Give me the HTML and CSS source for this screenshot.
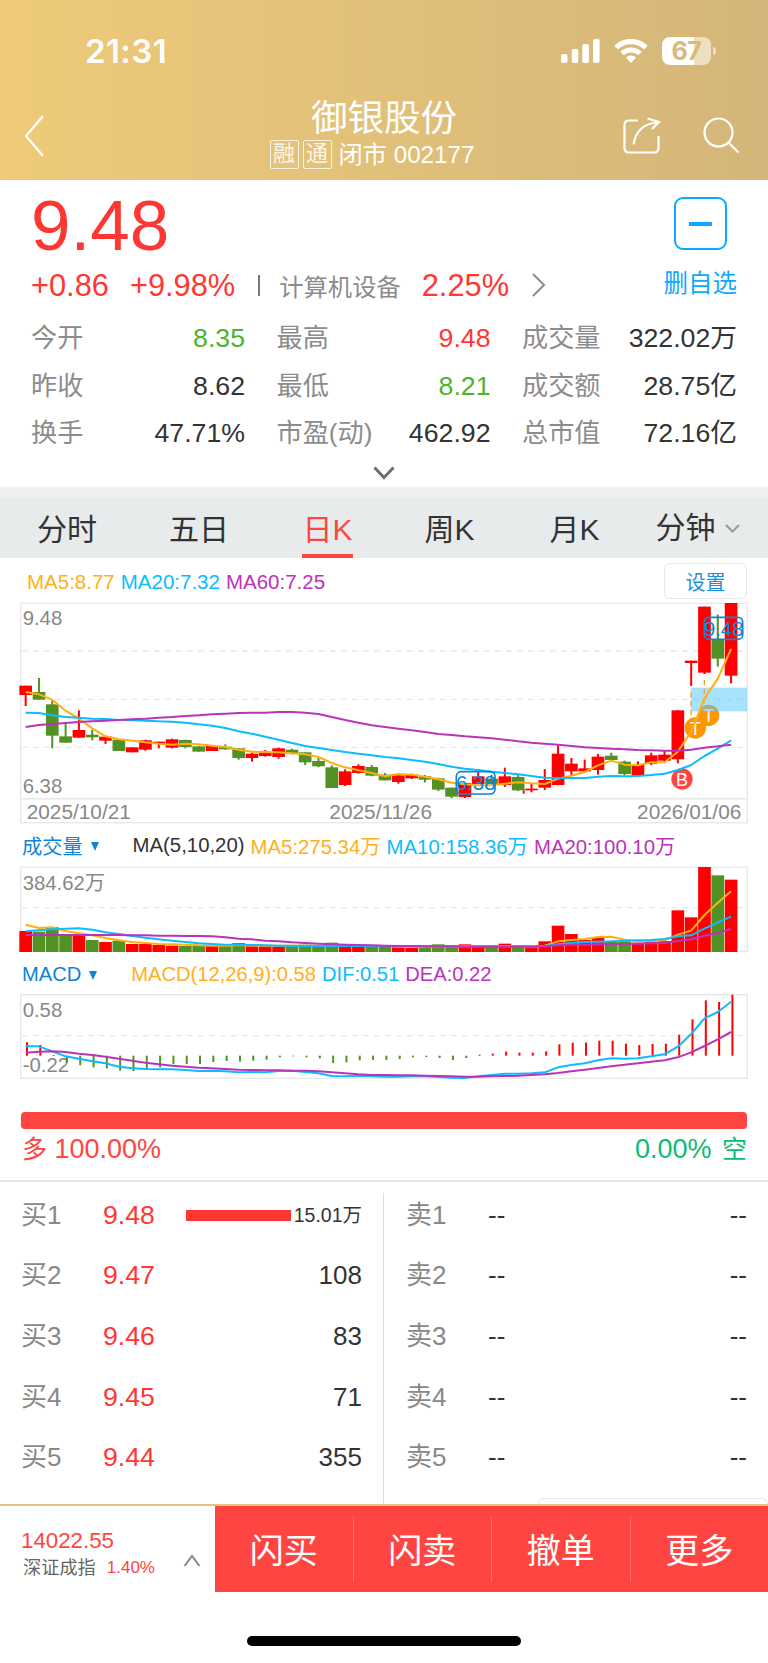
FILE: index.html
```html
<!DOCTYPE html>
<html lang="zh-CN">
<head>
  <meta charset="UTF-8" />
  <meta name="viewport" content="width=device-width, initial-scale=1.0" />
  <title>御银股份 002177</title>
  <link rel="stylesheet" href="styles.css">
</head>
<body>
  <header class="header">
    <div class="status-bar">
      <span class="clock">21:31</span>
      <div class="status-icons">
        <svg width="39" height="25" viewBox="0 0 39 25" fill="#fff">
          <rect x="0" y="15" width="6.600" height="9" rx="2" />
          <rect x="10.700" y="10" width="6.600" height="14" rx="2" />
          <rect x="21.300" y="5" width="6.600" height="19" rx="2" />
          <rect x="32" y="0" width="6.600" height="24" rx="2" />
        </svg>
        <svg width="34" height="25" viewBox="0 0 34 25" fill="#fff">
          <path d="M17 0C10.400 0 4.400 2.600 0.400 6.700L4 10.400C7.200 7.200 11.800 5.200 17 5.200S26.800 7.200 30 10.400L33.600 6.700C29.600 2.600 23.600 0 17 0Z" />
          <path d="M17 8.400C12.800 8.400 9 10.100 6.200 12.700L9.900 16.300C11.700 14.600 14.200 13.600 17 13.600S22.300 14.600 24.100 16.300L27.800 12.700C25 10.100 21.200 8.400 17 8.400Z" />
          <path d="M17 16.500C15 16.500 13.200 17.300 11.900 18.500L17 24L22.100 18.500C20.800 17.300 19 16.500 17 16.500Z" />
        </svg>
        <div class="battery"><span>67</span></div>
      </div>
    </div>
    <div class="nav-bar">
      <svg class="back" width="20" height="42" viewBox="0 0 20 42"><path d="M19 1L2 21L19 41" /></svg>
      <div class="nav-title">
        <h1>御银股份</h1>
        <p><i>融</i><i>通</i>闭市 002177</p>
      </div>
      <div class="nav-icons">
        <svg width="40" height="40" viewBox="0 0 40 40">
          <path d="M17 4.500H8Q3.500 4.500 3.500 9V32Q3.500 36.500 8 36.500H33Q37.500 36.500 37.500 32V20" />
          <path d="M12.500 28.500C14.500 16 21 7.500 37 6.500" />
          <path d="M26.500 2.500L38 6L31 13" />
        </svg>
        <svg width="40" height="40" viewBox="0 0 40 40">
          <circle cx="17.500" cy="16.500" r="14" />
          <path d="M27.500 26.500L37.500 36.500" />
        </svg>
      </div>
    </div>
  </header>

  <section class="quote">
    <div class="quote-top">
      <div class="price">9.48</div>
      <div class="remove-btn"></div>
    </div>
    <div class="change">
      <span class="up">+0.86</span>
      <span class="up pct">+9.98%</span>
      <span class="bar"></span>
      <span class="sector">计算机设备</span>
      <span class="up">2.25%</span>
      <svg width="14" height="24" viewBox="0 0 14 24"><path d="M1 1L12 12L1 23" /></svg>
      <span class="remove">删自选</span>
    </div>
    <div class="stats">
      <div><label>今开</label><b class="down">8.35</b></div>
      <div><label>最高</label><b class="up">9.48</b></div>
      <div><label>成交量</label><b>322.02万</b></div>
      <div><label>昨收</label><b>8.62</b></div>
      <div><label>最低</label><b class="down">8.21</b></div>
      <div><label>成交额</label><b>28.75亿</b></div>
      <div><label>换手</label><b>47.71%</b></div>
      <div><label>市盈(动)</label><b>462.92</b></div>
      <div><label>总市值</label><b>72.16亿</b></div>
    </div>
    <svg class="expand" width="22" height="14" viewBox="0 0 22 14"><path d="M1.500 1.500L11 11.500L20.500 1.500" /></svg>
  </section>

  <nav class="tabs">
    <span>分时</span>
    <span>五日</span>
    <span class="active">日K</span>
    <span>周K</span>
    <span>月K</span>
    <span>分钟<svg width="15" height="9" viewBox="0 0 15 9"><path d="M1 1L7.500 7.500L14 1" /></svg></span>
  </nav>

  <section class="charts">
    <div class="legend legend-ma">
      <span class="c-orange">MA5:8.77</span>
      <span class="c-blue">MA20:7.32</span>
      <span class="c-purple">MA60:7.25</span>
      <button class="setting">设置</button>
    </div>
    <svg id="kline" width="768" height="222" viewBox="0 21 2304 666"></svg>

    <div class="legend legend-vol">
      <span class="name">成交量</span><span class="arrow"></span>
      <span class="c-dark">MA(5,10,20)</span>
      <span class="c-orange">MA5:275.34万</span>
      <span class="c-blue">MA10:158.36万</span>
      <span class="c-purple">MA20:100.10万</span>
    </div>
    <svg id="volume" width="768" height="88" viewBox="0 108 2304 264"></svg>

    <div class="legend legend-macd">
      <span class="name">MACD</span><span class="arrow"></span>
      <span class="c-orange">MACD(12,26,9):0.58</span>
      <span class="c-blue">DIF:0.51</span>
      <span class="c-purple">DEA:0.22</span>
    </div>
    <svg id="macd" width="768" height="88" viewBox="0 489 2304 264"></svg>
  </section>

  <section class="ratio">
    <div class="ratio-bar"></div>
    <div class="ratio-text">
      <span class="long"><em>多</em> 100.00%</span>
      <span class="short">0.00% <em>空</em></span>
    </div>
  </section>

  <section class="book">
    <div class="side buy">
      <div class="row"><span class="lv">买1</span><span class="px">9.48</span><span class="depth"></span><span class="vol small">15.01万</span></div>
      <div class="row"><span class="lv">买2</span><span class="px">9.47</span><span class="vol">108</span></div>
      <div class="row"><span class="lv">买3</span><span class="px">9.46</span><span class="vol">83</span></div>
      <div class="row"><span class="lv">买4</span><span class="px">9.45</span><span class="vol">71</span></div>
      <div class="row"><span class="lv">买5</span><span class="px">9.44</span><span class="vol">355</span></div>
    </div>
    <div class="side sell">
      <div class="row"><span class="lv">卖1</span><span class="px">--</span><span class="vol">--</span></div>
      <div class="row"><span class="lv">卖2</span><span class="px">--</span><span class="vol">--</span></div>
      <div class="row"><span class="lv">卖3</span><span class="px">--</span><span class="vol">--</span></div>
      <div class="row"><span class="lv">卖4</span><span class="px">--</span><span class="vol">--</span></div>
      <div class="row"><span class="lv">卖5</span><span class="px">--</span><span class="vol">--</span></div>
    </div>
    <div class="peek"></div>
  </section>

  <footer class="footer">
    <div class="index">
      <div>
        <div class="index-value">14022.55</div>
        <div class="index-name">深证成指<span>1.40%</span></div>
      </div>
      <svg width="18" height="13" viewBox="0 0 18 13"><path d="M1.500 12L9 2L16.500 12" /></svg>
    </div>
    <div class="actions">
      <span>闪买</span>
      <span>闪卖</span>
      <span>撤单</span>
      <span>更多</span>
    </div>
  </footer>
  <div class="home-bar"></div>

  <script src="script.js"></script>
</body>
</html>
```
FILE: styles.css
```css
* {
  box-sizing: border-box;
}
body {
  margin: 0;
  width: 768px;
  height: 1663px;
  overflow: hidden;
  background: #fff;
  color: #333;
  font-family: "Liberation Sans", "Noto Sans CJK SC", sans-serif;
}
svg {
  display: block;
  flex: none;
}
span, b, label {
  white-space: nowrap;
}
.up {
  color: #ff3733;
}
.down {
  color: #4cb42c;
}

/* header */
.header {
  height: 180px;
  background: linear-gradient(90deg, #eeca79, #d4b67a);
  color: #fff;
}
.status-bar {
  display: flex;
  justify-content: space-between;
  height: 90px;
  padding: 34px 57px 0 85px;
}
.clock {
  font-family: Inter, sans-serif;
  font-size: 33px;
  font-weight: 600;
  line-height: 35px;
  letter-spacing: 0.4px;
}
.status-icons {
  display: flex;
  gap: 14px;
  padding-top: 5px;
}
.battery {
  position: relative;
  width: 49px;
  height: 28px;
  margin-top: -2px;
  border-radius: 8px;
  background: linear-gradient(90deg, #fff 66%, #eddfc2 66%);
  color: #dbb978;
  text-align: center;
  font: 700 25px/28px Inter, sans-serif;
  letter-spacing: -0.5px;
}
.battery::after {
  content: "";
  position: absolute;
  right: -5px;
  top: 10px;
  width: 3px;
  height: 8px;
  border-radius: 0 4px 4px 0;
  background: #eddfc2;
}
.nav-bar {
  display: grid;
  grid-template-columns: 200px 1fr 200px;
  height: 90px;
}
.nav-bar svg {
  fill: none;
  stroke: #fff;
  stroke-width: 2.2;
}
.nav-bar .back {
  margin: 25px 0 0 24px;
}
.nav-title {
  text-align: center;
}
.nav-title h1 {
  margin: 5px 0 0;
  font-size: 36.500px;
  font-weight: 400;
  line-height: 48px;
}
.nav-title p {
  display: flex;
  justify-content: center;
  margin: -3px 0 0;
  padding-right: 24px;
  font-size: 24.200px;
  line-height: 30px;
  white-space: nowrap;
}
.nav-title i {
  width: 29px;
  height: 29px;
  margin: 0 4px 0 0;
  border: 1.500px solid rgba(255, 255, 255, 0.8);
  border-radius: 2px;
  font-size: 22px;
  font-style: normal;
  line-height: 26px;
  color: rgba(255, 255, 255, 0.85);
}
.nav-title i + i {
  margin-right: 7px;
}
.nav-icons {
  display: flex;
  gap: 40px;
  padding: 26px 0 0 53px;
}

/* quote */
.quote {
  height: 307px;
  padding: 0 31px;
}
.quote-top {
  display: flex;
  justify-content: space-between;
  height: 88px;
}
.price {
  font-size: 71px;
  line-height: 91px;
  color: #ff3733;
}
.remove-btn {
  display: flex;
  align-items: center;
  justify-content: center;
  width: 53px;
  height: 53px;
  margin: 17px 10px 0 0;
  border: 2px solid #0ea9ff;
  border-radius: 9px;
}
.remove-btn::before {
  content: "";
  width: 23px;
  height: 4px;
  background: #0ea9ff;
}
.change {
  display: flex;
  align-items: center;
  height: 38px;
  margin-top: -1px;
  font-size: 30.800px;
}
.change .pct {
  margin-left: 21px;
}
.change .bar {
  width: 2px;
  height: 21px;
  margin: -2px 19px 0 23px;
  background: #777;
}
.change .sector {
  margin: -2px 21px 0 0;
  font-size: 24.300px;
  color: #8c8c8c;
}
.change svg {
  margin: -3px 0 0 23px;
  fill: none;
  stroke: #8c8c8c;
  stroke-width: 2;
}
.change .remove {
  margin: -9px 0 0 auto;
  font-size: 24.500px;
  color: #0ea9ff;
}
.stats {
  display: grid;
  grid-template-columns: 214px 214px 215px;
  column-gap: 31.500px;
  padding-top: 9px;
}
.stats div {
  display: flex;
  justify-content: space-between;
  align-items: baseline;
  height: 47.700px;
  font-size: 26.200px;
  line-height: 48px;
}
.stats label {
  color: #8c8c8c;
}
.stats b {
  font-size: 26.700px;
  font-weight: 400;
}
.expand {
  margin: 9px auto 0;
  fill: none;
  stroke: #6e6e6e;
  stroke-width: 3;
}

/* period tabs */
.tabs {
  display: grid;
  grid-template-columns: 132px 133.500px 122px 125px 106px auto;
  height: 71px;
  padding-left: 37px;
  border-top: 11px solid #f0f0f0;
  background: #e7ebec;
  font-size: 30px;
  line-height: 64px;
}
.tabs span {
  position: relative;
  height: 60px;
}
.tabs span:last-child {
  display: flex;
  align-items: center;
  gap: 9px;
}
.tabs svg {
  fill: none;
  stroke: #999;
  stroke-width: 2;
}
.tabs .active {
  color: #ff4541;
}
.tabs .active::after {
  content: "";
  position: absolute;
  left: -1px;
  bottom: 0;
  width: 51px;
  height: 4px;
  background: #ff4541;
}

/* charts */
.legend {
  display: flex;
  align-items: center;
  font-size: 20.500px;
}
.legend span + span {
  margin-left: 6px;
}
.legend-ma {
  height: 44px;
  padding: 3px 21px 0 27px;
}
.legend-vol {
  height: 42px;
  padding-left: 22px;
  font-size: 20.350px;
}
.legend-macd {
  height: 39px;
  padding: 1px 0 0 22px;
  font-size: 20.150px;
}
.legend .name {
  color: #0d84d8;
}
.legend-vol .name {
  font-size: 20.200px;
}
.legend span.arrow {
  margin: 2px 34px 0 8px;
  border: 4.500px solid transparent;
  border-top: 9px solid #0d84d8;
  border-bottom: 0;
}
.legend .arrow + span {
  margin-left: 0;
}
.c-orange { color: #ffb020; }
.c-blue { color: #0cbcff; }
.c-purple { color: #bb33bb; }
.c-dark { color: #333; }
.setting {
  width: 83px;
  height: 36px;
  margin: -1px 0 0 auto;
  padding: 0;
  border: 1.500px solid #e6e6e6;
  border-radius: 6px;
  background: #fff;
  color: #1a8fe0;
  font: inherit;
  font-size: 20px;
}
.charts text {
  font-size: 61px;
  fill: #888;
}
.charts .date {
  font-size: 62.500px;
}
.charts .frame {
  fill: none;
  stroke: #e8e8e8;
  stroke-width: 4;
}
.charts .grid {
  stroke: #e8e8e8;
  stroke-width: 4;
  stroke-dasharray: 17 16;
}
.charts .line {
  fill: none;
  stroke-width: 6;
  stroke-linejoin: round;
}
.charts .tag rect {
  fill: none;
  stroke: #0d84d8;
  stroke-width: 5;
}
.charts .tag text {
  fill: #0d84d8;
}
.charts .mark {
  fill: #fff;
  text-anchor: middle;
  font-size: 54px;
}

/* long / short ratio */
.ratio {
  height: 101px;
  padding: 30.500px 21px 0;
  border-bottom: 2px solid #e6e6e6;
}
.ratio-bar {
  height: 17px;
  border-radius: 4px;
  background: #ff4541;
}
.ratio-text {
  display: flex;
  justify-content: space-between;
  padding: 0 0 0 1px;
  font-size: 27px;
  line-height: 40px;
}
.ratio-text em {
  font-size: 25px;
  font-style: normal;
}
.ratio-text .short em {
  margin-left: 3px;
}
.long { color: #ff4541; }
.short { color: #0dbb74; }

/* order book */
.book {
  position: relative;
  display: flex;
  height: 322px;
  padding-top: 11px;
  overflow: hidden;
}
.side {
  width: 384px;
  font-size: 26px;
}
.buy {
  padding: 0 21px 0 21px;
  border-right: 1px solid #ddd;
}
.sell {
  padding: 0 21px 0 22px;
}
.row {
  display: flex;
  align-items: baseline;
  height: 60.700px;
  line-height: 60px;
}
.row:first-child {
  margin-top: -8.500px;
}
.lv {
  width: 82px;
  color: #888;
}
.buy .px {
  color: #ff3733;
  font-size: 26.700px;
}
.depth {
  align-self: center;
  width: 105px;
  height: 11px;
  margin: 2px 0 0 31px;
  background: #ff3733;
}
.vol {
  margin-left: auto;
}
.vol.small {
  position: relative;
  top: -2px;
  font-size: 19.500px;
}
.peek {
  position: absolute;
  right: 0;
  bottom: -10px;
  width: 230px;
  height: 16px;
  border: 1.500px solid #e6e6e6;
  border-radius: 6px;
}

/* footer */
.footer {
  display: flex;
  height: 88px;
  border-top: 2px solid #e8c27a;
}
.index {
  display: flex;
  justify-content: space-between;
  width: 215px;
  padding: 20px 14px 0 21px;
}
.index svg {
  margin-top: 28px;
  fill: none;
  stroke: #888;
  stroke-width: 2;
}
.index-value {
  font-size: 22.300px;
  line-height: 30px;
  color: #ff4541;
}
.index-name {
  padding-left: 2px;
  font-size: 18.200px;
  line-height: 25px;
  color: #666;
}
.index-name span {
  position: relative;
  top: -1px;
  margin-left: 11px;
  font-size: 17px;
  color: #ff4541;
}
.actions {
  display: flex;
  flex: 1;
  align-items: center;
  background: #ff4541;
  color: #fff;
}
.actions span {
  flex: 1;
  height: 65px;
  font-size: 34px;
  line-height: 68px;
  text-align: center;
}
.actions span:not(:last-child) {
  border-right: 1px solid #ff6f6a;
}
.home-bar {
  width: 274px;
  height: 10px;
  margin: 44px auto 0;
  border-radius: 5px;
  background: #000;
}
```
FILE: script.js
```js
const RED = '#ff0000';
const GREEN = '#529222';
const ORANGE = '#ffb010';
const BLUE = '#0cbcff';
const PURPLE = '#bb33bb';
const STEP = 39.93;
const LEFT = 77;

// [dir, body top, body bottom, high, low]
const candles = [
  [1,272,300,272,333],[0,291,314,249,314],[0,328,422,317,460],[0,424,443,387,443],[1,405,428,346,428],
  [0,419,427,404,436],[1,425,437,423,447],[0,434,468,434,468],[1,457,472,457,472],[1,436,464,434,467],
  [1,440,445,440,460],[1,433,458,431,460],[0,435,456,434,460],[0,454,470,454,470],[1,453,468,453,468],
  [0,455,463,448,464],[0,460,489,460,494],[1,476,489,473,500],[1,472,483,465,485],[1,460,486,458,491],
  [0,464,476,461,478],[0,472,502,472,510],[0,498,514,487,516],[0,517,579,511,579],[1,529,570,523,573],
  [1,513,534,508,536],[0,516,542,510,544],[0,539,556,534,556],[1,541,561,539,566],[1,539,550,536,552],
  [0,544,554,540,562],[0,550,584,548,588],[0,578,605,578,609],[1,564,606,564,609],[1,544,567,531,567],
  [0,551,567,539,571],[1,544,570,518,576],[0,546,586,540,588],[1,581,586,565,592],[1,555,578,522,585],
  [1,476,570,451,571],[1,506,529,489,543],[1,520,529,494,531],[1,485,525,477,539],[0,482,495,473,499],
  [0,500,537,497,541],[1,509,542,499,545],[1,481,506,473,510],[1,479,497,465,502],[1,346,493,346,505],
  [1,197,204,197,273],[1,35,233,35,237],[0,132,191,59,215],[1,24,242,24,265]
];
const ma5 = [291,298,314,347,371,400,424,433,437,442,446,449,446,448,452,456,464,470,471,472,475,478,486,504,517,526,534,544,537,539,545,553,563,568,571,570,566,562,565,567,551,542,531,511,497,509,511,502,502,470,410,310,251,162];
const ma20 = [353,354,361,366,368,371,372,375,376,377,379,380,383,388,392,399,409,416,425,434,444,453,459,465,471,476,481,486,490,495,500,507,515,521,525,530,534,538,543,548,549,549,549,545,543,544,543,540,536,525,510,483,461,436];
const ma60 = [396,390,387,384,381,379,377,375,373,371,368,366,363,361,358,356,354,353,353,351,351,353,357,366,375,383,391,396,401,406,411,417,420,424,427,430,434,439,443,446,449,453,457,459,461,463,465,466,467,467,464,458,454,449];

const volume = [303,305,291,318,316,330,336,332,342,342,345,347,348,348,348,347,339,349,349,350,348,344,346,338,342,346,348,349,352,353,349,343,348,343,345,350,341,351,352,334,287,312,330,324,334,334,338,336,333,241,262,111,136,149];
// 1 = up day, 0 = down day
const volDir = '100010101111001001110000110011000110101111110011111101';
const vma5 = [284,294,292,303,310,316,324,331,336,339,342,343,344,346,347,347,346,346,347,347,347,347,347,346,346,347,347,348,349,350,350,349,349,349,348,348,348,348,350,347,334,330,327,321,320,329,333,334,331,314,302,255,218,184];
const vma10 = [304,301,298,296,295,299,307,312,318,323,328,332,336,340,342,344,344,345,346,347,347,348,348,348,348,348,348,348,348,349,349,349,349,349,349,349,349,349,349,348,343,339,336,335,334,332,331,330,327,319,316,296,277,260];
const vma20 = [315,315,315,315,315,315,315,315,316,316,317,317,318,318,319,322,326,328,332,334,337,339,341,343,344,345,346,347,348,348,349,349,349,350,350,350,350,350,350,349,346,344,344,343,342,342,341,340,339,333,328,317,308,297];

const macd = [637,645,675,697,706,712,715,722,723,717,712,703,702,702,696,693,695,692,689,682,679,682,685,699,697,691,690,690,687,682,681,684,690,684,674,671,665,668,668,664,643,638,638,632,632,641,645,642,641,614,568,511,516,494];
const dif = [649,649,664,679,686,694,700,710,715,717,718,718,720,723,722,724,727,726,727,723,722,726,730,738,739,737,739,740,740,739,739,741,743,744,739,735,731,731,730,727,712,705,700,691,685,686,685,679,673,650,612,565,546,515];
const dea = [668,665,664,666,671,675,680,686,692,698,703,707,710,713,715,717,719,720,721,721,722,722,724,727,730,733,735,735,736,736,737,738,739,740,740,739,738,737,735,733,729,724,719,714,709,704,700,695,691,682,667,648,628,606];

const px = i => LEFT + i * STEP;
const rect = (x, y, w, h, fill) => `<rect x="${x}" y="${y}" width="${w}" height="${h}" fill="${fill}"/>`;
const line = (data, color) =>
  `<polyline class="line" stroke="${color}" points="${data.map((y, i) => px(i) + ',' + y).join(' ')}"/>`;
const frame = (y, h) => `<rect class="frame" x="62" y="${y}" width="2180" height="${h}"/>`;
const grid = y => `<line class="grid" x1="66" y1="${y}" x2="2240" y2="${y}"/>`;
const text = (x, y, s, anchor = 'start', cls = '') =>
  `<text class="${cls}" x="${x}" y="${y}" text-anchor="${anchor}">${s}</text>`;

function drawKline() {
  let s = frame(25, 586) + frame(611, 72) + [168, 313, 457].map(grid).join('');
  s += text(68, 90, '9.48') + text(68, 593, '6.38');
  s += text(80, 671, '2025/10/21', 'start', 'date');
  s += text(1142, 671, '2025/11/26', 'middle', 'date');
  s += text(2224, 671, '2026/01/06', 'end', 'date');
  candles.forEach(([up, top, bottom, high, low], i) => {
    const c = up ? RED : GREEN;
    s += rect(px(i) - 19, top, 38, bottom - top, c) + rect(px(i) - 3, high, 6, low - high, c);
  });
  s += rect(1568, 586, 6, 10, RED);
  s += '<circle cx="2126" cy="361" r="32" fill="#ff9500"/>';
  s += '<text class="mark" x="2126" y="381">T</text>';
  s += rect(2073, 278, 168, 71, 'rgba(80,198,255,0.5)');
  s += '<path d="M2073 292V399M2113 255V330" stroke="#f0a030" stroke-width="4" stroke-dasharray="16 10"/>';
  s += '<circle cx="2086" cy="399" r="32" fill="#ff9500"/>';
  s += '<text class="mark" x="2086" y="419">T</text>';
  s += '<circle cx="2046" cy="552" r="32" fill="#ff4541"/>';
  s += line(ma5, ORANGE) + line(ma20, BLUE) + line(ma60, PURPLE);
  s += '<text class="mark" x="2046" y="572">B</text>';
  s += '<g class="tag"><rect x="1369" y="530" width="116" height="67" rx="14"/>' + text(1427, 586, '6.38', 'middle') + '</g>';
  s += '<g class="tag"><rect x="2113" y="67" width="115" height="66" rx="14"/>' + text(2171, 122, '9.48', 'middle') + '</g>';
  document.getElementById('kline').innerHTML = s;
}

function drawVolume() {
  let s = frame(112, 252) + grid(233) + text(68, 180, '384.62万');
  volume.forEach((y, i) => {
    s += rect(px(i) - 19, y, 38, 366 - y, volDir[i] === '1' ? RED : GREEN);
  });
  s += line(vma5, ORANGE) + line(vma10, BLUE) + line(vma20, PURPLE);
  document.getElementById('volume').innerHTML = s;
}

function drawMacd() {
  const zero = 677;
  let s = frame(494, 251) + grid(617) + text(68, 562, '0.58') + text(68, 727, '-0.22');
  macd.forEach((y, i) => {
    s += rect(px(i) + 1, Math.min(y, zero), 6, Math.abs(y - zero), y < zero ? RED : GREEN);
  });
  s += line(dif, BLUE) + line(dea, PURPLE);
  document.getElementById('macd').innerHTML = s;
}

drawKline();
drawVolume();
drawMacd();
```
